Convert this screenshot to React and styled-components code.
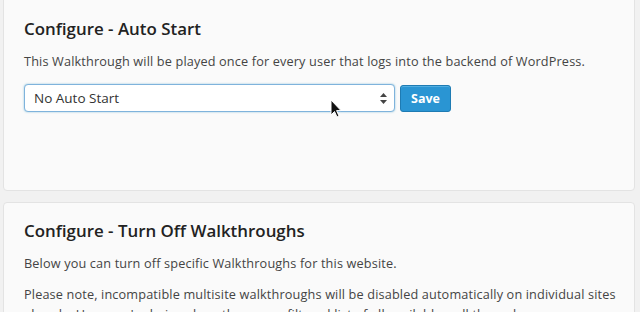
import styled, { createGlobalStyle } from "styled-components";

const Global = createGlobalStyle`
  html, body {
    margin: 0;
    padding: 0;
    background: #f1f1f1;
    font-family: "Open Sans", "Liberation Sans", sans-serif;
    color: #444;
    overflow: hidden;
  }
`;

const Page = styled.div`
  display: flex;
  flex-direction: column;
  row-gap: 11px;
  padding: 0 5px 0 3px;
  margin-top: -10px;
`;

const Panel = styled.div`
  background: #fafafa;
  border: 1px solid #e3e3e3;
  border-radius: 4px;
  padding: ${p => p.pad || "22px 20px 20px"};
  min-height: ${p => p.minH || "auto"};
  box-sizing: border-box;
`;

const Title = styled.h2`
  margin: 0 0 ${p => p.mb || 8}px;
  font-size: 16.9px;
  font-weight: 600;
  color: #222;
  line-height: 24px;
`;

const Text = styled.p`
  margin: 0 0 ${p => p.mb || 14}px;
  font-size: 12.7px;
  letter-spacing: 0.15px;
  line-height: 20px;
  color: #444;
`;

const Row = styled.div`
  display: flex;
  align-items: center;
  column-gap: 5px;
  position: relative;
`;

const SelectBox = styled.div`
  width: 371px;
  height: 28px;
  box-sizing: border-box;
  border: 1px solid #7fb3dc;
  border-radius: 4px;
  box-shadow: 0 0 2px rgba(30, 140, 190, 0.5);
  background: #fff;
  display: flex;
  align-items: center;
  justify-content: space-between;
  padding: 0 7px 0 9px;
  font-size: 13.5px;
  color: #333;
`;

const Arrows = styled.svg`
  width: 7px;
  height: 11px;
`;

const SaveButton = styled.button`
  height: 27px;
  padding: 0 10px;
  background: #2a95d3;
  border: 1px solid #1e7bb3;
  border-radius: 3px;
  color: #fff;
  font-family: inherit;
  font-size: 12.5px;
  font-weight: 700;
  box-shadow: inset 0 1px 0 rgba(120, 200, 240, 0.5);
`;

const Cursor = styled.svg`
  position: absolute;
  left: 306px;
  top: 15px;
  width: 12px;
  height: 19px;
`;

export default function App() {
  return (
    <>
      <Global />
      <Page>
        <Panel pad="26px 14px 20px 20px" minH="201px">
          <Title mb={10}>Configure - Auto Start</Title>
          <Text mb={13}>
            This Walkthrough will be played once for every user that logs into the backend of WordPress.
          </Text>
          <Row>
            <SelectBox>
              <span>No Auto Start</span>
              <Arrows viewBox="0 0 7 11">
                <path d="M3.5 0 L7 4 L0 4 Z M3.5 11 L7 7 L0 7 Z" fill="#444" />
              </Arrows>
            </SelectBox>
            <SaveButton>Save</SaveButton>
            <Cursor viewBox="0 0 12 19">
              <path d="M1 1 L1 16 L4.5 12.5 L7 18 L9 17 L6.6 11.6 L11 11.6 Z" fill="#111" stroke="#fff" strokeWidth="1" />
            </Cursor>
          </Row>
        </Panel>
        <Panel pad="16px 14px 20px 20px">
          <Title mb={10}>Configure - Turn Off Walkthroughs</Title>
          <Text mb={11}>Below you can turn off specific Walkthroughs for this website.</Text>
          <Text>
            Please note, incompatible multisite walkthroughs will be disabled automatically on individual sites
            already. Here you're being show the raw unfiltered list of all available walkthroughs.
          </Text>
        </Panel>
      </Page>
    </>
  );
}
